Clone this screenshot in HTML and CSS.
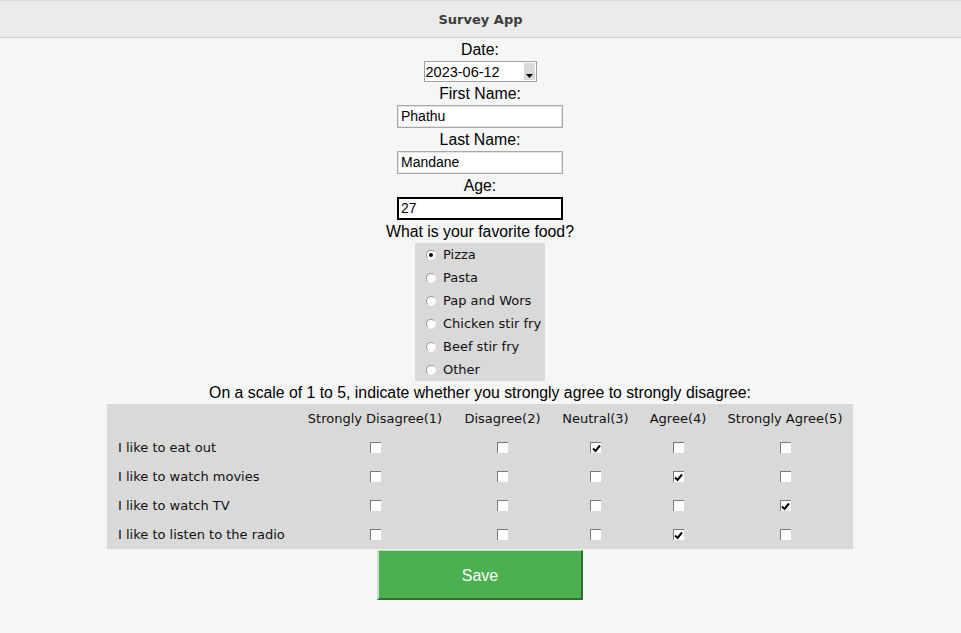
FILE: index.html
```html
<!DOCTYPE html>
<html>
<head>
<meta charset="utf-8">
<title>Survey App</title>
<link rel="stylesheet" href="styles.css">
</head>
<body>
<header class="titlebar"><span class="title">Survey App</span></header>
<main class="form">
  <div class="label">Date:</div>
  <div class="combo">
    <span class="combo-text">2023-06-12</span>
    <span class="combo-btn"><svg width="7" height="4" viewBox="0 0 7 4"><polygon points="0,0 7,0 3.5,4" fill="#000"/></svg></span>
  </div>
  <div class="label">First Name:</div>
  <div class="entry">Phathu</div>
  <div class="label">Last Name:</div>
  <div class="entry">Mandane</div>
  <div class="label">Age:</div>
  <div class="entry focused">27</div>
  <div class="label">What is your favorite food?</div>
  <div class="radios">
    <div class="radio"><span class="dot on"></span>Pizza</div>
    <div class="radio"><span class="dot"></span>Pasta</div>
    <div class="radio"><span class="dot"></span>Pap and Wors</div>
    <div class="radio"><span class="dot"></span>Chicken stir fry</div>
    <div class="radio"><span class="dot"></span>Beef stir fry</div>
    <div class="radio"><span class="dot"></span>Other</div>
  </div>
  <div class="label">On a scale of 1 to 5, indicate whether you strongly agree to strongly disagree:</div>
  <div class="scale">
    <div class="cell"></div>
    <div class="cell head">Strongly Disagree(1)</div>
    <div class="cell head">Disagree(2)</div>
    <div class="cell head">Neutral(3)</div>
    <div class="cell head">Agree(4)</div>
    <div class="cell head">Strongly Agree(5)</div>

    <div class="cell stmt">I like to eat out</div>
    <div class="cell"><span class="cb"></span></div>
    <div class="cell"><span class="cb"></span></div>
    <div class="cell"><span class="cb"><svg class="tick" width="9" height="9" viewBox="0 0 9 9"><path d="M1 4.5 L3.5 7 L8 1.5" fill="none" stroke="#000" stroke-width="2"/></svg></span></div>
    <div class="cell"><span class="cb"></span></div>
    <div class="cell"><span class="cb"></span></div>

    <div class="cell stmt">I like to watch movies</div>
    <div class="cell"><span class="cb"></span></div>
    <div class="cell"><span class="cb"></span></div>
    <div class="cell"><span class="cb"></span></div>
    <div class="cell"><span class="cb"><svg class="tick" width="9" height="9" viewBox="0 0 9 9"><path d="M1 4.5 L3.5 7 L8 1.5" fill="none" stroke="#000" stroke-width="2"/></svg></span></div>
    <div class="cell"><span class="cb"></span></div>

    <div class="cell stmt">I like to watch TV</div>
    <div class="cell"><span class="cb"></span></div>
    <div class="cell"><span class="cb"></span></div>
    <div class="cell"><span class="cb"></span></div>
    <div class="cell"><span class="cb"></span></div>
    <div class="cell"><span class="cb"><svg class="tick" width="9" height="9" viewBox="0 0 9 9"><path d="M1 4.5 L3.5 7 L8 1.5" fill="none" stroke="#000" stroke-width="2"/></svg></span></div>

    <div class="cell stmt">I like to listen to the radio</div>
    <div class="cell"><span class="cb"></span></div>
    <div class="cell"><span class="cb"></span></div>
    <div class="cell"><span class="cb"></span></div>
    <div class="cell"><span class="cb"><svg class="tick" width="9" height="9" viewBox="0 0 9 9"><path d="M1 4.5 L3.5 7 L8 1.5" fill="none" stroke="#000" stroke-width="2"/></svg></span></div>
    <div class="cell"><span class="cb"></span></div>
  </div>
  <button class="save">Save</button>
</main>
</body>
</html>
```
FILE: styles.css
```css
html, body {
  margin: 0;
  padding: 0;
  background: #f6f6f6;
}
body {
  width: 961px;
  height: 633px;
  overflow: hidden;
  font-family: "Liberation Sans", Arial, sans-serif;
  color: #000;
}
.titlebar {
  background: #ebebeb;
  border-top: 1px solid #d8d8d8;
  border-bottom: 1px solid #cfcfcf;
  box-sizing: border-box;
  height: 38px;
  display: flex;
  align-items: center;
  justify-content: center;
}
.title {
  font-family: "DejaVu Sans", sans-serif;
  font-weight: bold;
  font-size: 13px;
  color: #3c3c3c;
}
.form {
  width: 960px;
  display: flex;
  flex-direction: column;
  align-items: center;
}
.label {
  font-size: 15.8px;
  line-height: 23px;
  height: 23px;
  white-space: nowrap;
}
.combo {
  width: 113px;
  height: 21px;
  box-sizing: border-box;
  border: 1px solid #a0a0a0;
  background: #fff;
  display: flex;
  align-items: center;
  justify-content: space-between;
}
.combo-text {
  font-size: 14.5px;
  padding-left: 1px;
}
.combo-btn {
  width: 11px;
  height: 17px;
  margin-right: 1px;
  background: #d9d9d9;
  display: flex;
  align-items: flex-end;
  justify-content: center;
  padding-bottom: 2px;
  box-sizing: border-box;
}
.entry {
  width: 166px;
  height: 23px;
  box-sizing: border-box;
  border: 1px solid #a8a8a8;
  box-shadow: inset 0 0 0 1px #e2e2e2;
  background: #fff;
  font-size: 14px;
  line-height: 21px;
  padding-left: 3px;
}
.entry.focused {
  border: 2px solid #000;
  box-shadow: none;
  line-height: 19px;
  padding-left: 2px;
}
.radios {
  width: 130px;
  box-sizing: border-box;
  background: #d9d9d9;
  padding-left: 11px;
  display: flex;
  flex-direction: column;
}
.radio {
  height: 23px;
  display: flex;
  align-items: center;
  font-family: "DejaVu Sans", sans-serif;
  font-size: 13px;
  color: #111;
  white-space: nowrap;
}
.dot {
  width: 10px;
  height: 10px;
  border-radius: 50%;
  background: #fff;
  box-sizing: border-box;
  border-top: 1px solid #9a9a9a;
  border-left: 1px solid #9a9a9a;
  border-right: 1px solid #f4f4f4;
  border-bottom: 1px solid #f4f4f4;
  margin-right: 7px;
  position: relative;
}
.dot.on::after {
  content: "";
  position: absolute;
  left: 2px;
  top: 2px;
  width: 4px;
  height: 4px;
  border-radius: 50%;
  background: #000;
}
.scale {
  width: 746px;
  background: #d9d9d9;
  display: grid;
  grid-template-columns: 190px 156px 99px 87px 78px 136px;
  grid-auto-rows: 29px;
  font-family: "DejaVu Sans", sans-serif;
  font-size: 13px;
  color: #111;
}
.cell {
  display: flex;
  align-items: center;
  justify-content: center;
  white-space: nowrap;
}
.cell.stmt {
  justify-content: flex-start;
  padding-left: 11px;
}
.cb {
  width: 11px;
  height: 11px;
  box-sizing: border-box;
  background: #fff;
  border-top: 1px solid #7a7a7a;
  border-left: 1px solid #7a7a7a;
  display: flex;
  align-items: center;
  justify-content: center;
}
.tick {
  display: block;
}
.save {
  margin-top: 1px;
  width: 206px;
  height: 50px;
  background: #4caf50;
  color: #fff;
  font-family: "Liberation Sans", Arial, sans-serif;
  font-size: 16px;
  border-top: 1px solid #b9dcb9;
  border-left: 2px solid #c9e2c9;
  border-right: 2px solid #2e7031;
  border-bottom: 2px solid #2e7031;
  padding: 0;
  padding-top: 2px;
}
```
